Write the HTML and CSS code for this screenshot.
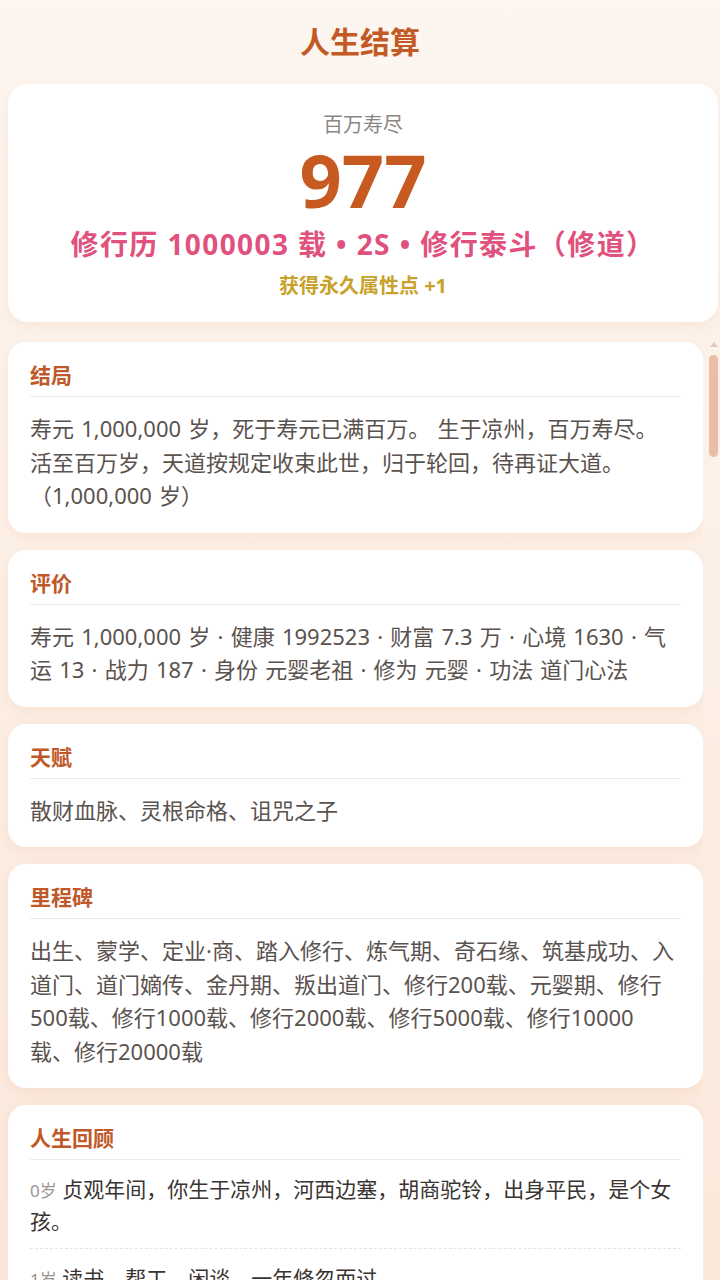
FILE: index.html
```html
<!DOCTYPE html>
<html lang="zh-CN">
<head>
<meta charset="utf-8">
<title>人生结算</title>
<link rel="stylesheet" href="styles.css">
</head>
<body>
<div class="page">
  <h1 class="page-title">人生结算</h1>
  <section class="summary">
    <div class="summary-label">百万寿尽</div>
    <div class="summary-score">977</div>
    <div class="summary-line">修行历 1000003 载 • 2S • 修行泰斗（修道）</div>
    <div class="summary-bonus">获得永久属性点 +1</div>
  </section>
  <div class="scroll-wrap">
    <div class="scroll">
      <section class="card">
        <h2 class="card-title">结局</h2>
        <p class="card-body"><span class="block">寿元 1,000,000 岁，死于寿元已满百万。 生于凉州，百万寿尽。</span><span class="block">活至百万岁，天道按规定收束此世，归于轮回，待再证大道。（1,000,000 岁）</span></p>
      </section>
      <section class="card">
        <h2 class="card-title">评价</h2>
        <p class="card-body">寿元 1,000,000 岁 · 健康 1992523 · 财富 7.3 万 · 心境 1630 · 气运 13 · 战力 187 · 身份 元婴老祖 · 修为 元婴 · 功法 道门心法</p>
      </section>
      <section class="card">
        <h2 class="card-title">天赋</h2>
        <p class="card-body">散财血脉、灵根命格、诅咒之子</p>
      </section>
      <section class="card">
        <h2 class="card-title">里程碑</h2>
        <p class="card-body">出生、蒙学、定业·商、踏入修行、炼气期、奇石缘、筑基成功、入道门、道门嫡传、金丹期、叛出道门、修行200载、元婴期、修行500载、修行1000载、修行2000载、修行5000载、修行10000载、修行20000载</p>
      </section>
      <section class="card">
        <h2 class="card-title">人生回顾</h2>
        <ul class="review">
          <li><span class="age">0岁</span> 贞观年间，你生于凉州，河西边塞，胡商驼铃，出身平民，是个女孩。</li>
          <li><span class="age">1岁</span> 读书、帮工、闲谈，一年倏忽而过。</li>
          <li><span class="age">2岁</span> 读书、帮工、闲谈，一年倏忽而过。</li>
        </ul>
      </section>
    </div>
    <div class="scrollbar" aria-hidden="true">
      <span class="sb-arrow"></span>
      <span class="sb-thumb"></span>
    </div>
  </div>
</div>
</body>
</html>
```
FILE: styles.css
```css
* {
  box-sizing: border-box;
}

html, body {
  margin: 0;
  padding: 0;
  height: 100%;
}

body {
  font-family: "Noto Sans", "Noto Sans CJK SC", sans-serif;
  background: linear-gradient(180deg, #fdf6f0 0%, #fcefe5 50%, #fbe8db 100%);
  color: #5a524e;
  overflow: hidden;
}

.page {
  height: 100vh;
  display: flex;
  flex-direction: column;
}

.page-title {
  margin: 0;
  padding-top: 19px;
  height: 84px;
  text-align: center;
  font-family: "Noto Sans CJK SC", sans-serif;
  font-size: 30px;
  line-height: 42px;
  font-weight: 700;
  color: #c35a25;
}

.summary {
  margin: 0 2px 0 8px;
  padding: 26px 10px 22px;
  background: #fff;
  border-radius: 20px;
  box-shadow: 0 4px 16px rgba(210, 140, 100, 0.12);
  text-align: center;
  height: 238px;
}

.summary-label {
  font-family: "Noto Sans CJK SC", sans-serif;
  font-size: 20px;
  line-height: 28px;
  color: #8a8684;
}

.summary-score {
  font-size: 74px;
  line-height: 84px;
  font-weight: 700;
  color: #c65a20;
}

.summary-line {
  margin-top: 2px;
  font-size: 28px;
  line-height: 40px;
  letter-spacing: 1.4px;
  font-weight: 700;
  color: #e0517d;
  white-space: nowrap;
}

.summary-bonus {
  margin-top: 8px;
  font-size: 20px;
  line-height: 28px;
  font-weight: 700;
  color: #c8a22a;
}

.scroll-wrap {
  flex: 1;
  min-height: 0;
  margin: 18px 2px 0 0;
  display: flex;
}

.scroll {
  flex: 1;
  min-width: 0;
  padding: 2px 0 20px 8px;
  overflow: hidden;
  display: flex;
  flex-direction: column;
  gap: 17px;
}

.scrollbar {
  flex: none;
  width: 9px;
  margin-left: 6px;
  display: flex;
  flex-direction: column;
  align-items: center;
}

.sb-arrow {
  margin-top: 2px;
  width: 0;
  height: 0;
  border-left: 4px solid transparent;
  border-right: 4px solid transparent;
  border-bottom: 5px solid #e4c9ba;
}

.sb-thumb {
  margin-top: 8px;
  width: 9px;
  height: 102px;
  border-radius: 5px;
  background: #e9bda6;
}

.card {
  flex: none;
  padding: 18px 22px 20px;
  background: #fff;
  border-radius: 18px;
  box-shadow: 0 4px 14px rgba(210, 140, 100, 0.12);
}

.card-title {
  margin: 0;
  padding-bottom: 8px;
  border-bottom: 1px solid #f1e9e5;
  font-family: "Noto Sans CJK SC", sans-serif;
  font-size: 21px;
  line-height: 28px;
  font-weight: 700;
  color: #c0582a;
}

.card-body {
  margin: 15px 0 0;
  padding-right: 5px;
  font-size: 22px;
  line-height: 33.5px;
  word-spacing: 1.5px;
  color: #5a524e;
}

.block {
  display: block;
}

.review {
  list-style: none;
  margin: 0;
  padding: 0;
}

.review li {
  padding: 14px 0 12px;
  font-size: 21px;
  line-height: 30px;
  color: #3a3431;
  border-bottom: 1px dashed #ebe3df;
}

.age {
  font-size: 17px;
  color: #9c9592;
}
```
